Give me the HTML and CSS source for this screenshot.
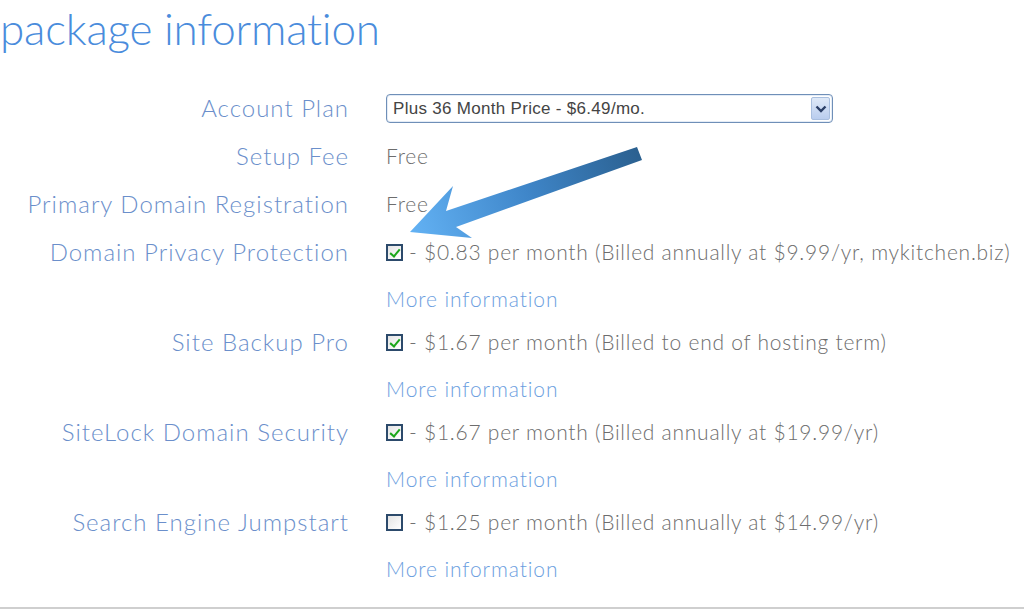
FILE: index.html
```html
<!doctype html>
<html>
<head>
<meta charset='utf-8' />
<title>package information</title>
<link rel="stylesheet" href="styles.css">
</head>
<body>
<div class="page">
	<h1>package information</h1>
	<div class="form">
		<div class="label">Account Plan</div>
		<div class="value">
			<div class="select">
				<span>Plus 36 Month Price - $6.49/mo.</span>
				<span class="drop"><svg width="12" height="8" viewBox="0 0 12 8"><path d="M1.5 1.5 L6 6 L10.5 1.5" fill="none" stroke="#2b3f66" stroke-width="2.4"/></svg></span>
			</div>
		</div>

		<div class="label">Setup Fee</div>
		<div class="value">Free</div>

		<div class="label">Primary Domain Registration</div>
		<div class="value">Free</div>

		<div class="label">Domain Privacy Protection</div>
		<div class="value group">
			<div class="opt"><span class="box on"></span> - $0.83 per month (Billed annually at $9.99/yr, mykitchen.biz)</div>
			<a class="more" href="javascript:;">More information</a>
		</div>

		<div class="label">Site Backup Pro</div>
		<div class="value group">
			<div class="opt"><span class="box on"></span> - $1.67 per month (Billed to end of hosting term)</div>
			<a class="more" href="javascript:;">More information</a>
		</div>

		<div class="label">SiteLock Domain Security</div>
		<div class="value group">
			<div class="opt"><span class="box on"></span> - $1.67 per month (Billed annually at $19.99/yr)</div>
			<a class="more" href="javascript:;">More information</a>
		</div>

		<div class="label">Search Engine Jumpstart</div>
		<div class="value group">
			<div class="opt"><span class="box"></span> - $1.25 per month (Billed annually at $14.99/yr)</div>
			<a class="more" href="javascript:;">More information</a>
		</div>
	</div>

	<!-- pointer drawn over the form -->
	<svg class="arrow" width="1024" height="300" viewBox="0 0 1024 300">
		<defs>
			<linearGradient id="ag" x1="642" y1="150" x2="410" y2="232" gradientUnits="userSpaceOnUse">
				<stop offset="0" stop-color="#2a5f8e"/>
				<stop offset="0.5" stop-color="#3f86c9"/>
				<stop offset="1" stop-color="#63b2f4"/>
			</linearGradient>
		</defs>
		<polygon points="410,232 453,186 446,211 637,147 642,160 456,227 472,238" fill="url(#ag)"/>
	</svg>
</div>
</body>
</html>
```

FILE: styles.css
```css
*{margin: 0;padding: 0;box-sizing: border-box;}
body{background: #fff;font-family: Lato, "Open Sans", sans-serif;font-weight: 300;}
.page{position: relative;height: 609px;border-bottom: 2px solid #cfcfcf;overflow: hidden;}
h1{font-weight: 300;font-size: 44px;line-height: 56px;color: #4a8cdc;letter-spacing: -0.2px;height: 84px;}

.form{display: grid;grid-template-columns: 348px 1fr;column-gap: 38px;}
.label{font-size: 24px;line-height: 48px;color: #6b8fcb;text-align: right;white-space: nowrap;letter-spacing: 1px;margin-right: -1px;}
.value{font-size: 21px;line-height: 48px;color: #6d6d6d;white-space: nowrap;letter-spacing: 0.75px;}
.group{height: 90px;}
.opt{display: flex;align-items: center;gap: 6px;height: 48px;}
.more{display: block;line-height: 38px;padding-top: 4px;color: #6b9ee0;text-decoration: none;letter-spacing: 0.9px;}

.box{width: 17px;height: 17px;border: 2px solid #2c4a6b;background: linear-gradient(135deg,#e4e4e4,#fff);position: relative;flex: none;}
.box.on::after{content: "";position: absolute;left: 4px;top: 1px;width: 4px;height: 8px;border: solid #1aa61a;border-width: 0 2.5px 2.5px 0;transform: rotate(40deg);}

.select{margin-top: 10px;width: 447px;height: 29px;border: 1px solid #6f8fb8;border-radius: 4px;display: flex;align-items: center;justify-content: space-between;padding: 0 2px 0 6px;font-family: "Liberation Sans", Arial, sans-serif;font-weight: 400;font-size: 17px;letter-spacing: 0.3px;color: #444;line-height: 27px;box-shadow: inset 0 0 0 1px #e4ecf6;}
.drop{width: 19px;height: 23px;border: 1px solid #a9bfdf;border-radius: 2px;background: linear-gradient(#dfe9f8,#b9cdee);display: flex;align-items: center;justify-content: center;}

.arrow{position: absolute;left: 0;top: 0;pointer-events: none;}
```
